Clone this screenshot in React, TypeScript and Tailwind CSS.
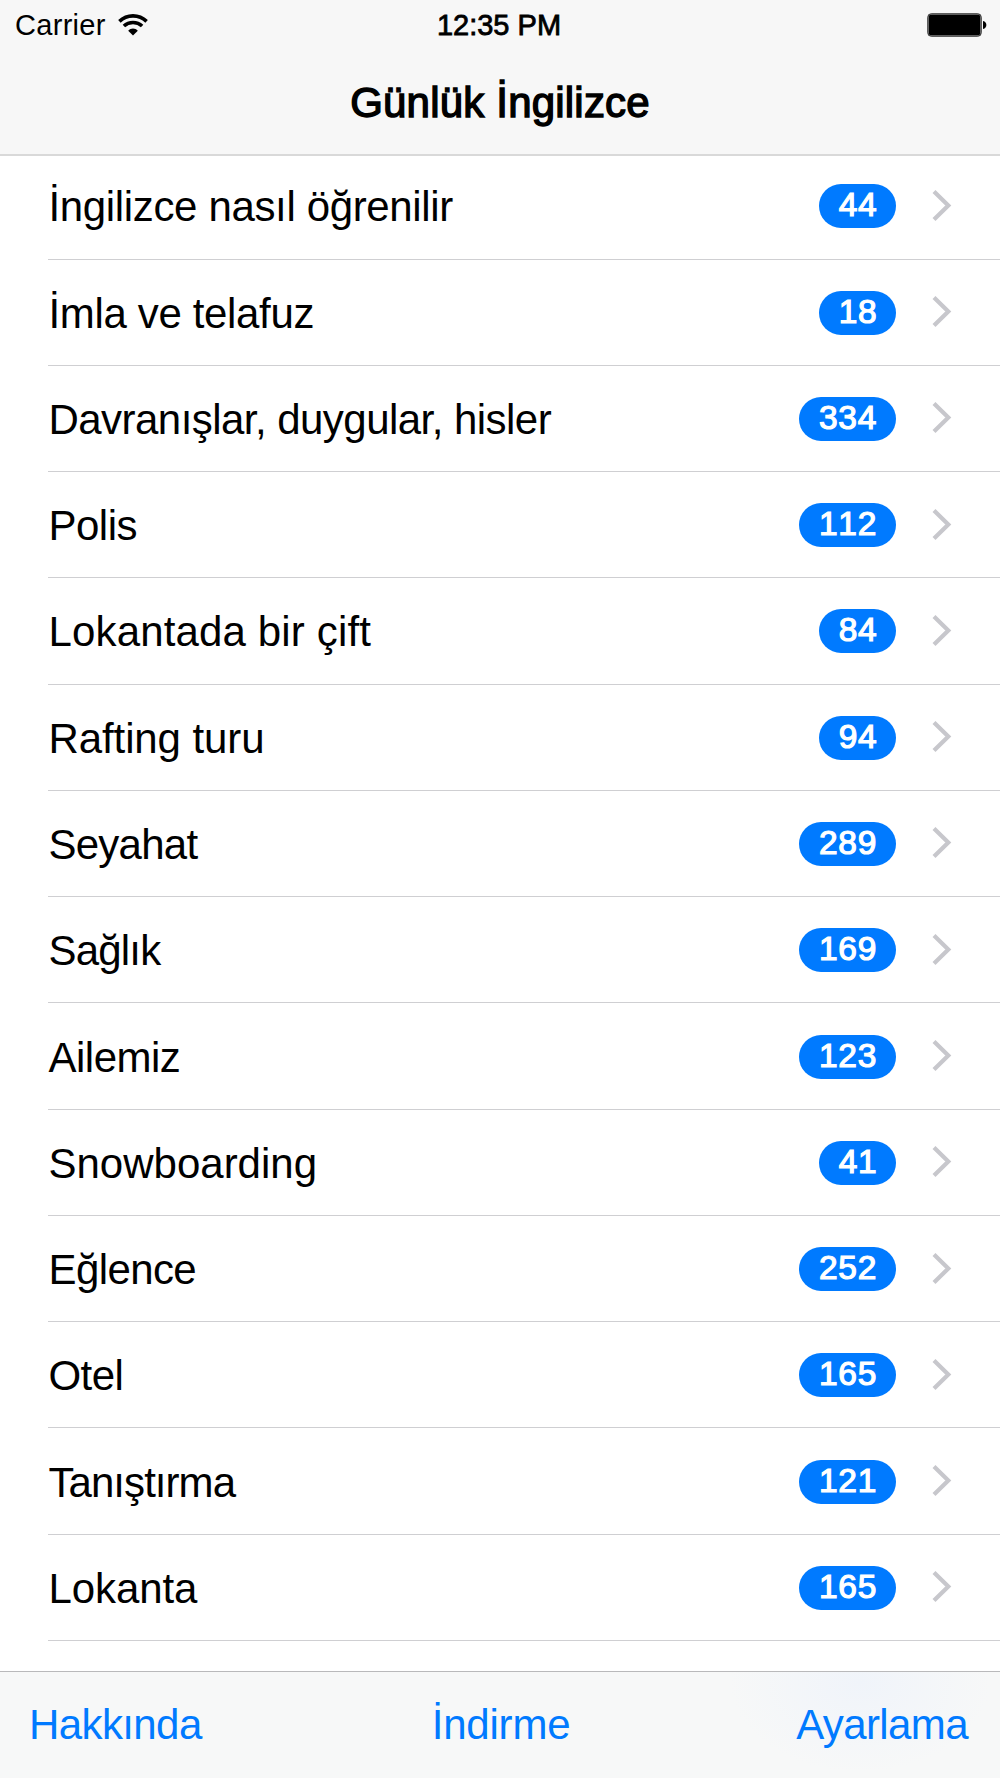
interface Category {
  title: string;
  count: number;
  tracking?: string;
}

const categories: Category[] = [
  { title: "İngilizce nasıl öğrenilir", count: 44, tracking: "tracking-[-0.35px]" },
  { title: "İmla ve telafuz", count: 18, tracking: "tracking-[-0.35px]" },
  { title: "Davranışlar, duygular, hisler", count: 334, tracking: "tracking-[-0.54px]" },
  { title: "Polis", count: 112, tracking: "tracking-[-0.5px]" },
  { title: "Lokantada bir çift", count: 84, tracking: "tracking-[0.15px]" },
  { title: "Rafting turu", count: 94, tracking: "tracking-[-0.1px]" },
  { title: "Seyahat", count: 289, tracking: "tracking-[-0.75px]" },
  { title: "Sağlık", count: 169, tracking: "tracking-[-0.8px]" },
  { title: "Ailemiz", count: 123, tracking: "tracking-[-0.5px]" },
  { title: "Snowboarding", count: 41 },
  { title: "Eğlence", count: 252, tracking: "tracking-[-0.6px]" },
  { title: "Otel", count: 165, tracking: "tracking-[-0.6px]" },
  { title: "Tanıştırma", count: 121, tracking: "tracking-[-0.95px]" },
  { title: "Lokanta", count: 165, tracking: "tracking-[-0.1px]" },
];

function WifiIcon() {
  return (
    <svg className="w-[30px] h-[22px]" viewBox="0 0 30 22" fill="none" stroke="#000" strokeWidth="3.6">
      <path d="M1.4 7.4C9 0 21 0 28.6 7.4" />
      <path d="M5.9 12C10.9 7.4 19.1 7.4 24.1 12" />
      <path d="M10.2 16.7C12.8 13.8 17.2 13.8 19.8 16.7L15 21.5Z" fill="#000" stroke="none" />
    </svg>
  );
}

function BatteryIcon() {
  return (
    <svg className="w-[60px] h-6" viewBox="0 0 60 24">
      <rect x="0.75" y="0.75" width="53.5" height="22.5" rx="3.5" fill="#999" stroke="#333" />
      <rect x="1.8" y="1.8" width="51.4" height="20.4" rx="2" fill="#000" />
      <path d="M56 8C60.5 9 60.5 15 56 16Z" fill="#000" />
    </svg>
  );
}

function StatusBar() {
  return (
    <div className="grid grid-cols-3 items-center h-[50px] pl-[14px] pr-[13px] text-[29px]">
      <div className="flex items-center gap-3">
        <span className="tracking-[0.3px] pt-[2px] pl-px">Carrier</span>
        <WifiIcon />
      </div>
      <span className="text-center pt-[2px] pr-[3px] [-webkit-text-stroke:0.8px_#000]">12:35 PM</span>
      <div className="flex justify-end">
        <BatteryIcon />
      </div>
    </div>
  );
}

function CategoryRow({ category }: { category: Category }) {
  return (
    <li className="flex items-center h-[106.28px] ml-12 pr-[48px] border-b border-[#cfcfd2]">
      <span className={`flex-1 text-[42px] leading-[50px] pt-[3px] pl-[0.5px] ${category.tracking ?? ""}`}>{category.title}</span>
      <span
        className={`flex items-center justify-center h-11 mt-px rounded-full bg-[#007aff] text-white text-[33.5px] leading-[42px] pb-[2px] pl-px tracking-[0.7px] [font-kerning:none] [-webkit-text-stroke:1.2px_#fff] ${
          category.count > 99 ? "w-[97px]" : "w-[77px]"
        }`}
      >
        {category.count}
      </span>
      <svg className="w-5 h-8 ml-9" viewBox="0 0 20 32" fill="none" stroke="#c7c7cc" strokeWidth="4.2">
        <path d="M2 1.5L16.3 15.5L2 29.5" />
      </svg>
    </li>
  );
}

export default function App() {
  return (
    <div className="flex flex-col w-[1000px] h-[1778px] overflow-hidden bg-white text-black font-['Liberation_Sans',Arial,sans-serif]">
      <header className="shrink-0 h-[156px] bg-[#f7f7f7] border-b-2 border-[#d9d9d9]">
        <StatusBar />
        <h1 className="text-center text-[42px] leading-[105px] tracking-[0.2px] [-webkit-text-stroke:1.4px_#000]">Günlük İngilizce</h1>
      </header>
      <main className="flex-1 overflow-hidden">
        <ul className="-mt-[2.75px]">
          {categories.map((category) => (
            <CategoryRow key={category.title} category={category} />
          ))}
        </ul>
      </main>
      <footer className="shrink-0 grid grid-cols-3 items-center h-[107px] pl-[29px] pr-[32px] pb-px bg-[#f7f8f8] bg-[radial-gradient(ellipse_130px_90px_at_860px_10px,#f0f4fa,#f7f8f8)] border-t border-[#b9b9bb] text-[42px] text-[#007aff]">
        <button className="text-left tracking-[-0.6px]">Hakkında</button>
        <button className="text-center tracking-[-0.2px] pl-[5px]">İndirme</button>
        <button className="text-right tracking-[-0.6px]">Ayarlama</button>
      </footer>
    </div>
  );
}
